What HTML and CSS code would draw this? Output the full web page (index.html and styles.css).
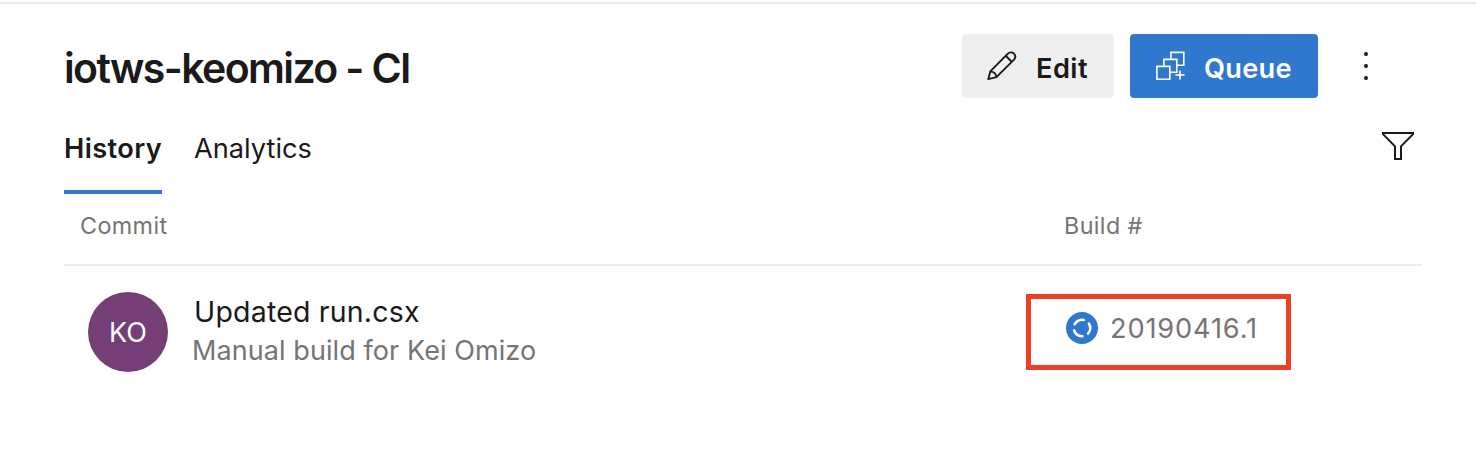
FILE: index.html
```html
<!DOCTYPE html>
<html lang="en">
<head>
<meta charset="utf-8">
<title>iotws-keomizo - CI</title>
<link rel="stylesheet" href="styles.css">
</head>
<body>
<main class="page">
  <header class="header">
    <h1 class="title"><span>iotws-keomizo - CI</span></h1>
    <button class="button button-edit">
      <svg class="button-icon" width="30" height="30" viewBox="0 0 30 30" fill="none" stroke="#1a1a1a" stroke-width="1.9" stroke-linejoin="round">
        <path d="M1.3 28.2 3.3 20.4 20.6 2.9C22.6 1 25.4 1.1 27 2.7S28.6 6.9 26.8 8.9L9.4 26.2ZM3.3 20.4C6.7 20.7 9.1 22.9 9.4 26.2M18.7 4.8 25 11"/>
      </svg>
      <span>Edit</span>
    </button>
    <button class="button button-queue">
      <svg class="button-icon" width="30" height="30" viewBox="0 0 30 30" fill="none" stroke="#fff" stroke-width="1.6">
        <path d="M.9 15.4H13.8V28.3H.9ZM7.9 15V8.4H20.8V21.3H14.2M14.9 8V1.4H27.8V14.3H21.2M24 19.4V28.6M19.4 24H28.6"/>
      </svg>
      <span>Queue</span>
    </button>
    <svg class="more" width="4" height="28" viewBox="0 0 4 28" fill="#1a1a1a"><circle cx="2" cy="2" r="2"/><circle cx="2" cy="14" r="2"/><circle cx="2" cy="26" r="2"/></svg>
  </header>
  <nav class="tabs">
    <a class="tab tab-active"><span>History</span></a>
    <a class="tab"><span>Analytics</span></a>
    <svg class="filter" width="32" height="28" viewBox="0 0 32 28" fill="none" stroke="#1a1a1a" stroke-width="2"><path d="M1 1H31V2.2L19 14.4V27H13V14.4L1 2.2Z"/></svg>
  </nav>
  <section class="table">
    <div class="row row-head">
      <span class="col-commit">Commit</span>
      <span>Build #</span>
    </div>
    <div class="row row-body">
      <div class="avatar"><span>KO</span></div>
      <div class="commit">
        <div class="commit-title"><span>Updated run.csx</span></div>
        <div class="commit-sub"><span>Manual build for Kei Omizo</span></div>
      </div>
      <div class="build">
        <svg class="status" width="32" height="32" viewBox="0 0 32 32"><circle cx="16" cy="16" r="16" fill="#3078cd"/><circle cx="16" cy="16" r="8.2" fill="none" stroke="#fff" stroke-width="2.6" stroke-linecap="round" pathLength="360" stroke-dasharray="76 44" transform="rotate(-33 16 16)"/></svg>
        <span>20190416.1</span>
      </div>
    </div>
  </section>
</main>
</body>
</html>
```
FILE: styles.css
```css
* { box-sizing: border-box; }
html, body { height: 472px; overflow: hidden; }
body { display: flow-root; margin: 0; background: #fff; color: #1a1a1a; font-family: Inter, "Liberation Sans", sans-serif; }
span { white-space: nowrap; }
.page { height: 470px; margin-top: 2px; border-top: 2px solid #eaeaea; padding: 30px 54px 0 64px; }
.header { display: flex; height: 64px; align-items: center; }
.title { margin: 3px auto 0 0; font-size: 41px; line-height: 50px; font-weight: 600; letter-spacing: -1.62px; }
.button { display: flex; align-items: center; height: 64px; border: 0; border-radius: 4px; padding: 0 0 0 25px; font: 600 27.2px/34px Inter, "Liberation Sans", sans-serif; letter-spacing: .45px; color: #1a1a1a; background: #efefef; }
.button span { margin-top: 5px; }
.button-icon { flex: none; margin-right: 19px; }
.button-edit { width: 152px; margin-right: 16px; }
.button-queue { width: 188px; background: #3078cd; color: #fff; letter-spacing: .25px; }
.button-queue .button-icon { margin-left: 1px; margin-right: 18px; }
.more { margin: 0 54px 0 46px; }
.tabs { display: flex; height: 96px; font-size: 27.2px; line-height: 34px; }
.tab { padding-top: 34px; margin-right: 32px; }
.tab-active { width: 98px; font-weight: 600; letter-spacing: .4px; border-bottom: 4px solid #3078cd; }
.filter { margin: 34px 8px 0 auto; }
.row { display: flex; }
.row-head { height: 72px; padding: 17px 0 0 16px; border-bottom: 2px solid #eaeaea; color: #757575; font-size: 23.3px; line-height: 30px; letter-spacing: .4px; }
.col-commit { width: 984px; }
.row-body { padding: 26px 0 0 24px; }
.avatar { display: flex; align-items: center; justify-content: center; width: 80px; height: 80px; border-radius: 50%; background: #763e76; color: #fff; font-size: 27px; }
.commit { width: 834px; padding: 1px 0 0 24px; }
.commit-title { padding-left: 2px; font-size: 28.5px; line-height: 38px; letter-spacing: .2px; }
.commit-sub { padding-top: 1px; font-size: 27px; line-height: 38px; letter-spacing: .08px; color: #757575; }
.build { display: flex; width: 265px; height: 76px; margin: 2px 0 0 24px; border: 5px solid #ec3f26; padding: 13px 0 0 35px; color: #757575; font-size: 27.2px; line-height: 34px; letter-spacing: .85px; }
.status { flex: none; margin-right: 12px; }
```
